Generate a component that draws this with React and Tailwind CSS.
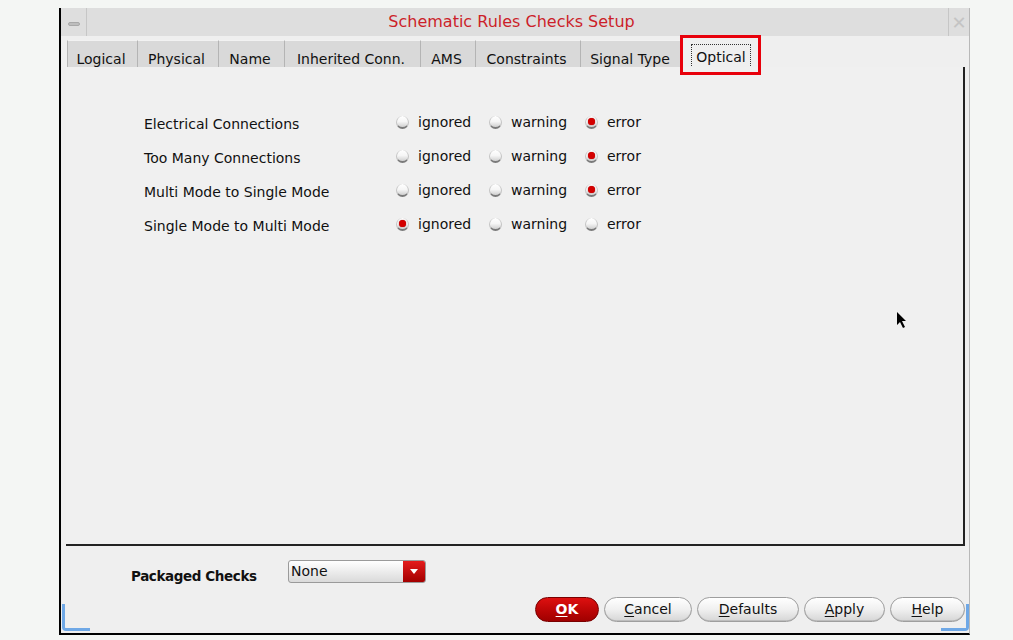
import React from 'react';

const tabs = [
  ['Logical', 70],
  ['Physical', 81],
  ['Name', 66],
  ['Inherited Conn.', 136],
  ['AMS', 55],
  ['Constraints', 105],
  ['Signal Type', 102],
];

const rows = [
  ['Electrical Connections', 'error'],
  ['Too Many Connections', 'error'],
  ['Multi Mode to Single Mode', 'error'],
  ['Single Mode to Multi Mode', 'ignored'],
];

const Radio = ({ on }) => (
  <span className="w-[13px] h-[13px] rounded-full bg-gradient-to-b from-white via-[#f6f6f6] to-[#d0d0d0] border-b-[2px] border-x border-[#7a7a7a] border-x-[#c4c4c4] flex items-center justify-center shrink-0">
    {on && <span className="w-[7px] h-[7px] rounded-full bg-[#d40000] shadow-[0_0_1px_#900]" />}
  </span>
);

const Option = ({ label, on, w }) => (
  <div className={`flex items-center gap-[9px] ${w}`}>
    <Radio on={on} />
    <span>{label}</span>
  </div>
);

const Btn = ({ first, rest, w }) => (
  <button className={`${w} h-[25px] rounded-full border border-[#9e9e9e] bg-gradient-to-b from-white via-[#f0f0f0] to-[#d6d6d6] text-[14px] text-[#111] flex items-center justify-center shadow-[inset_0_-1px_0_#bdbdbd]`}>
    <span className="underline underline-offset-2">{first}</span>{rest}
  </button>
);

export default function App() {
  return (
    <div className="w-[1013px] h-[640px] bg-[#f4f6f4] pt-[8px] pl-[59px] font-['DejaVu_Sans',sans-serif] text-[14px] text-[#111]">
      <div className="relative w-[911px] h-[627px] border-l-[2px] border-b-[2px] border-black border-r border-r-[#b8b8b8] bg-[#efefef] flex flex-col">
        {/* title bar */}
        <div className="h-[28px] flex bg-[#dedede] shrink-0">
          <div className="w-[26px] border-r border-[#c6c6c6] flex items-center justify-center pt-[4px]">
            <span className="w-[12px] h-[4px] rounded-sm bg-[#bdbdbd] border border-[#a8a8a8]" />
          </div>
          <div className="flex-1 flex items-center justify-center pr-[12px] text-[16px] text-[#cc1f2a]">
            Schematic Rules Checks Setup
          </div>
          <div className="w-[21px] border-l border-[#c6c6c6] flex items-center justify-center text-[18px] text-[#c4c4c4]">✕</div>
        </div>

        {/* tabs */}
        <div className="mt-[4px] h-[27px] pl-[6px] flex shrink-0">
          {tabs.map(([t, w]) => (
            <div key={t} style={{ width: w }} className="h-full bg-[#d9d9d9] border-t border-t-[#f2f2f2] border-l border-l-[#b4b4b4] flex justify-center pt-[10px] pr-[3px] leading-[17px]">
              {t}
            </div>
          ))}
          <div className="w-[77px] h-full bg-[#efefef] border-l border-l-[#b4b4b4] flex justify-center pt-[4px]">
            <span className="h-[24px] px-[4px] border border-dotted border-[#333] leading-[22px] pt-[1px]">Optical</span>
          </div>
        </div>

        {/* panel */}
        <div className="ml-[5px] w-[899px] h-[479px] border-r-[2px] border-b-[2px] border-[#222] bg-[#f0f0f0] pt-[40px] pl-[78px] shrink-0">
          {rows.map(([label, sel]) => (
            <div key={label} className="h-[34px] flex items-center">
              <div className="w-[252px] pt-[1px]">{label}</div>
              <div className="flex items-center mb-[4px]">
                <Option label="ignored" on={sel === 'ignored'} w="w-[93px]" />
                <Option label="warning" on={sel === 'warning'} w="w-[96px]" />
                <Option label="error" on={sel === 'error'} w="w-[80px]" />
              </div>
            </div>
          ))}
        </div>

        {/* packaged checks */}
        <div className="mt-[14px] h-[23px] flex items-center pl-[70px] shrink-0">
          <div className="w-[157px] font-bold text-[13.5px] tracking-[-0.4px] pt-[10px]">Packaged Checks</div>
          <div className="w-[138px] h-[23px] flex rounded-[3px] border border-[#9a9a9a] bg-gradient-to-b from-white to-[#dadada] overflow-hidden">
            <div className="flex-1 pl-[2px] leading-[21px]">None</div>
            <div className="w-[22px] bg-gradient-to-b from-[#e41b1b] to-[#a30000] flex items-center justify-center">
              <svg width="8" height="5" viewBox="0 0 8 5"><path d="M0 0h8L4 5z" fill="#fff" /></svg>
            </div>
          </div>
        </div>

        {/* buttons */}
        <div className="mt-[14px] h-[25px] flex justify-end gap-[5px] pr-[4px] shrink-0">
          <button className="w-[64px] h-[25px] rounded-full border border-[#7a0000] bg-gradient-to-b from-[#de1010] to-[#a00000] text-white font-bold text-[14px] flex items-center justify-center">
            <span className="underline underline-offset-2">O</span>K
          </button>
          <Btn first="C" rest="ancel" w="w-[88px]" />
          <Btn first="D" rest="efaults" w="w-[102px]" />
          <Btn first="A" rest="pply" w="w-[81px]" />
          <Btn first="H" rest="elp" w="w-[75px]" />
        </div>

        {/* resize corners */}
        <div className="absolute left-[1px] bottom-[2px] w-[28px] h-[27px] border-l-[3px] border-b-[3px] border-[#6fa8e6] rounded-bl-[4px]" />
        <div className="absolute right-0 bottom-[2px] w-[28px] h-[27px] border-r-[3px] border-b-[3px] border-[#6fa8e6] rounded-br-[4px]" />

        {/* highlight box */}
        <div className="absolute left-[619px] top-[27px] w-[81px] h-[40px] border-[3px] border-[#e8000b]" />

        {/* cursor */}
        <svg className="absolute left-[835px] top-[303px]" width="12" height="18" viewBox="0 0 12 18">
          <path d="M1 1v13l3-3 3 6 2-1-3-6h4z" fill="#000" />
        </svg>
      </div>
    </div>
  );
}
